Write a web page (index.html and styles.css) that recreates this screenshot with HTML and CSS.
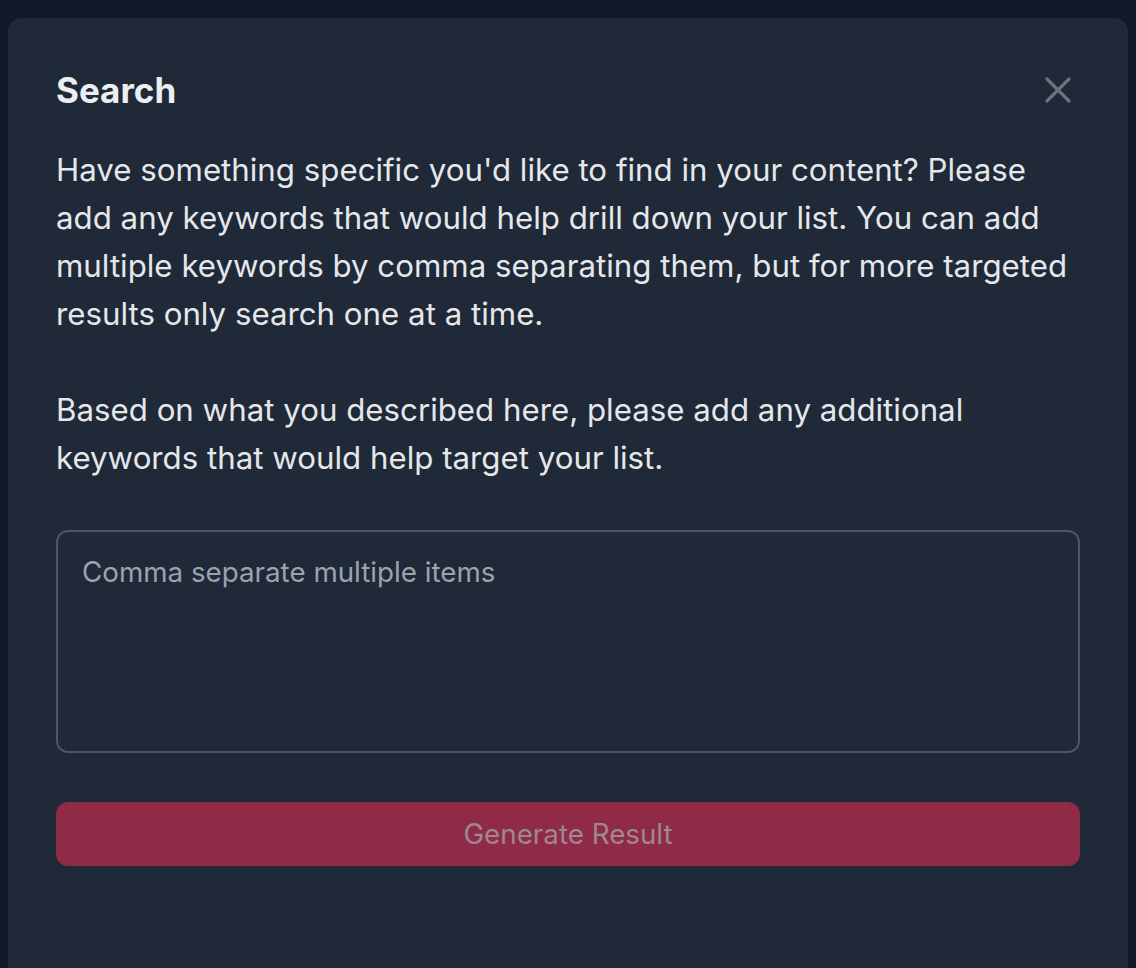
FILE: index.html
```html
<!DOCTYPE html>
<html>
<head>
<meta charset="utf-8">
<link rel="stylesheet" href="styles.css">
</head>
<body>
<div class="modal">
  <div class="header">
    <h2 class="title">Search</h2>
    <button class="close" aria-label="Close">
      <svg width="26" height="26" viewBox="0 0 26 26"><path d="M2 2 L24 24 M24 2 L2 24" stroke="#6b7280" stroke-width="3.2" stroke-linecap="round" fill="none"/></svg>
    </button>
  </div>
  <p class="desc">Have something specific you'd like to find in your content? Please add any keywords that would help drill down your list. You can add multiple keywords by comma separating them, but for more targeted results only search one at a time.</p>
  <p class="desc second">Based on what you described here, please add any additional keywords that would help target your list.</p>
  <textarea class="input" placeholder="Comma separate multiple items"></textarea>
  <button class="submit" disabled>Generate Result</button>
</div>
</body>
</html>
```
FILE: styles.css
```css
html, body {
  margin: 0;
  padding: 0;
  background: #111827;
  height: 100%;
  overflow: hidden;
}
body {
  padding: 18px 8px 0 8px;
  box-sizing: border-box;
  font-family: Inter, "Noto Sans", sans-serif;
}
.modal {
  background: #1f2937;
  border-radius: 14px 14px 0 0;
  padding: 50px 48px 100px 48px;
  height: 950px;
  box-sizing: border-box;
  display: flex;
  flex-direction: column;
}
.header {
  display: flex;
  align-items: center;
  justify-content: space-between;
  height: 44px;
}
.title {
  margin: 0;
  font-size: 35px;
  font-weight: 700;
  color: #eceef1;
  line-height: 44px;
}
.close {
  background: none;
  border: 0;
  padding: 0;
  margin-right: 9px;
  width: 26px;
  height: 26px;
  display: flex;
}
.desc {
  margin: 34px 0 0 0;
  font-size: 31.25px;
  line-height: 48px;
  color: #e5e7eb;
}
.desc.second {
  margin-top: 48px;
}
.input {
  margin-top: 48px;
  height: 223px;
  box-sizing: border-box;
  background: #1f2937;
  border: 2px solid #4b5563;
  border-radius: 12px;
  padding: 20px 24px;
  font-family: Inter, "Noto Sans", sans-serif;
  font-size: 27.75px;
  line-height: 40px;
  color: #e5e7eb;
  resize: none;
  outline: none;
}
.input::placeholder {
  color: #9ca3af;
}
.submit {
  margin-top: 49px;
  height: 64px;
  flex: none;
  border: 0;
  border-radius: 12px;
  background: #8f2b47;
  color: #9f8693;
  font-family: Inter, "Noto Sans", sans-serif;
  font-size: 27.75px;
}
```
